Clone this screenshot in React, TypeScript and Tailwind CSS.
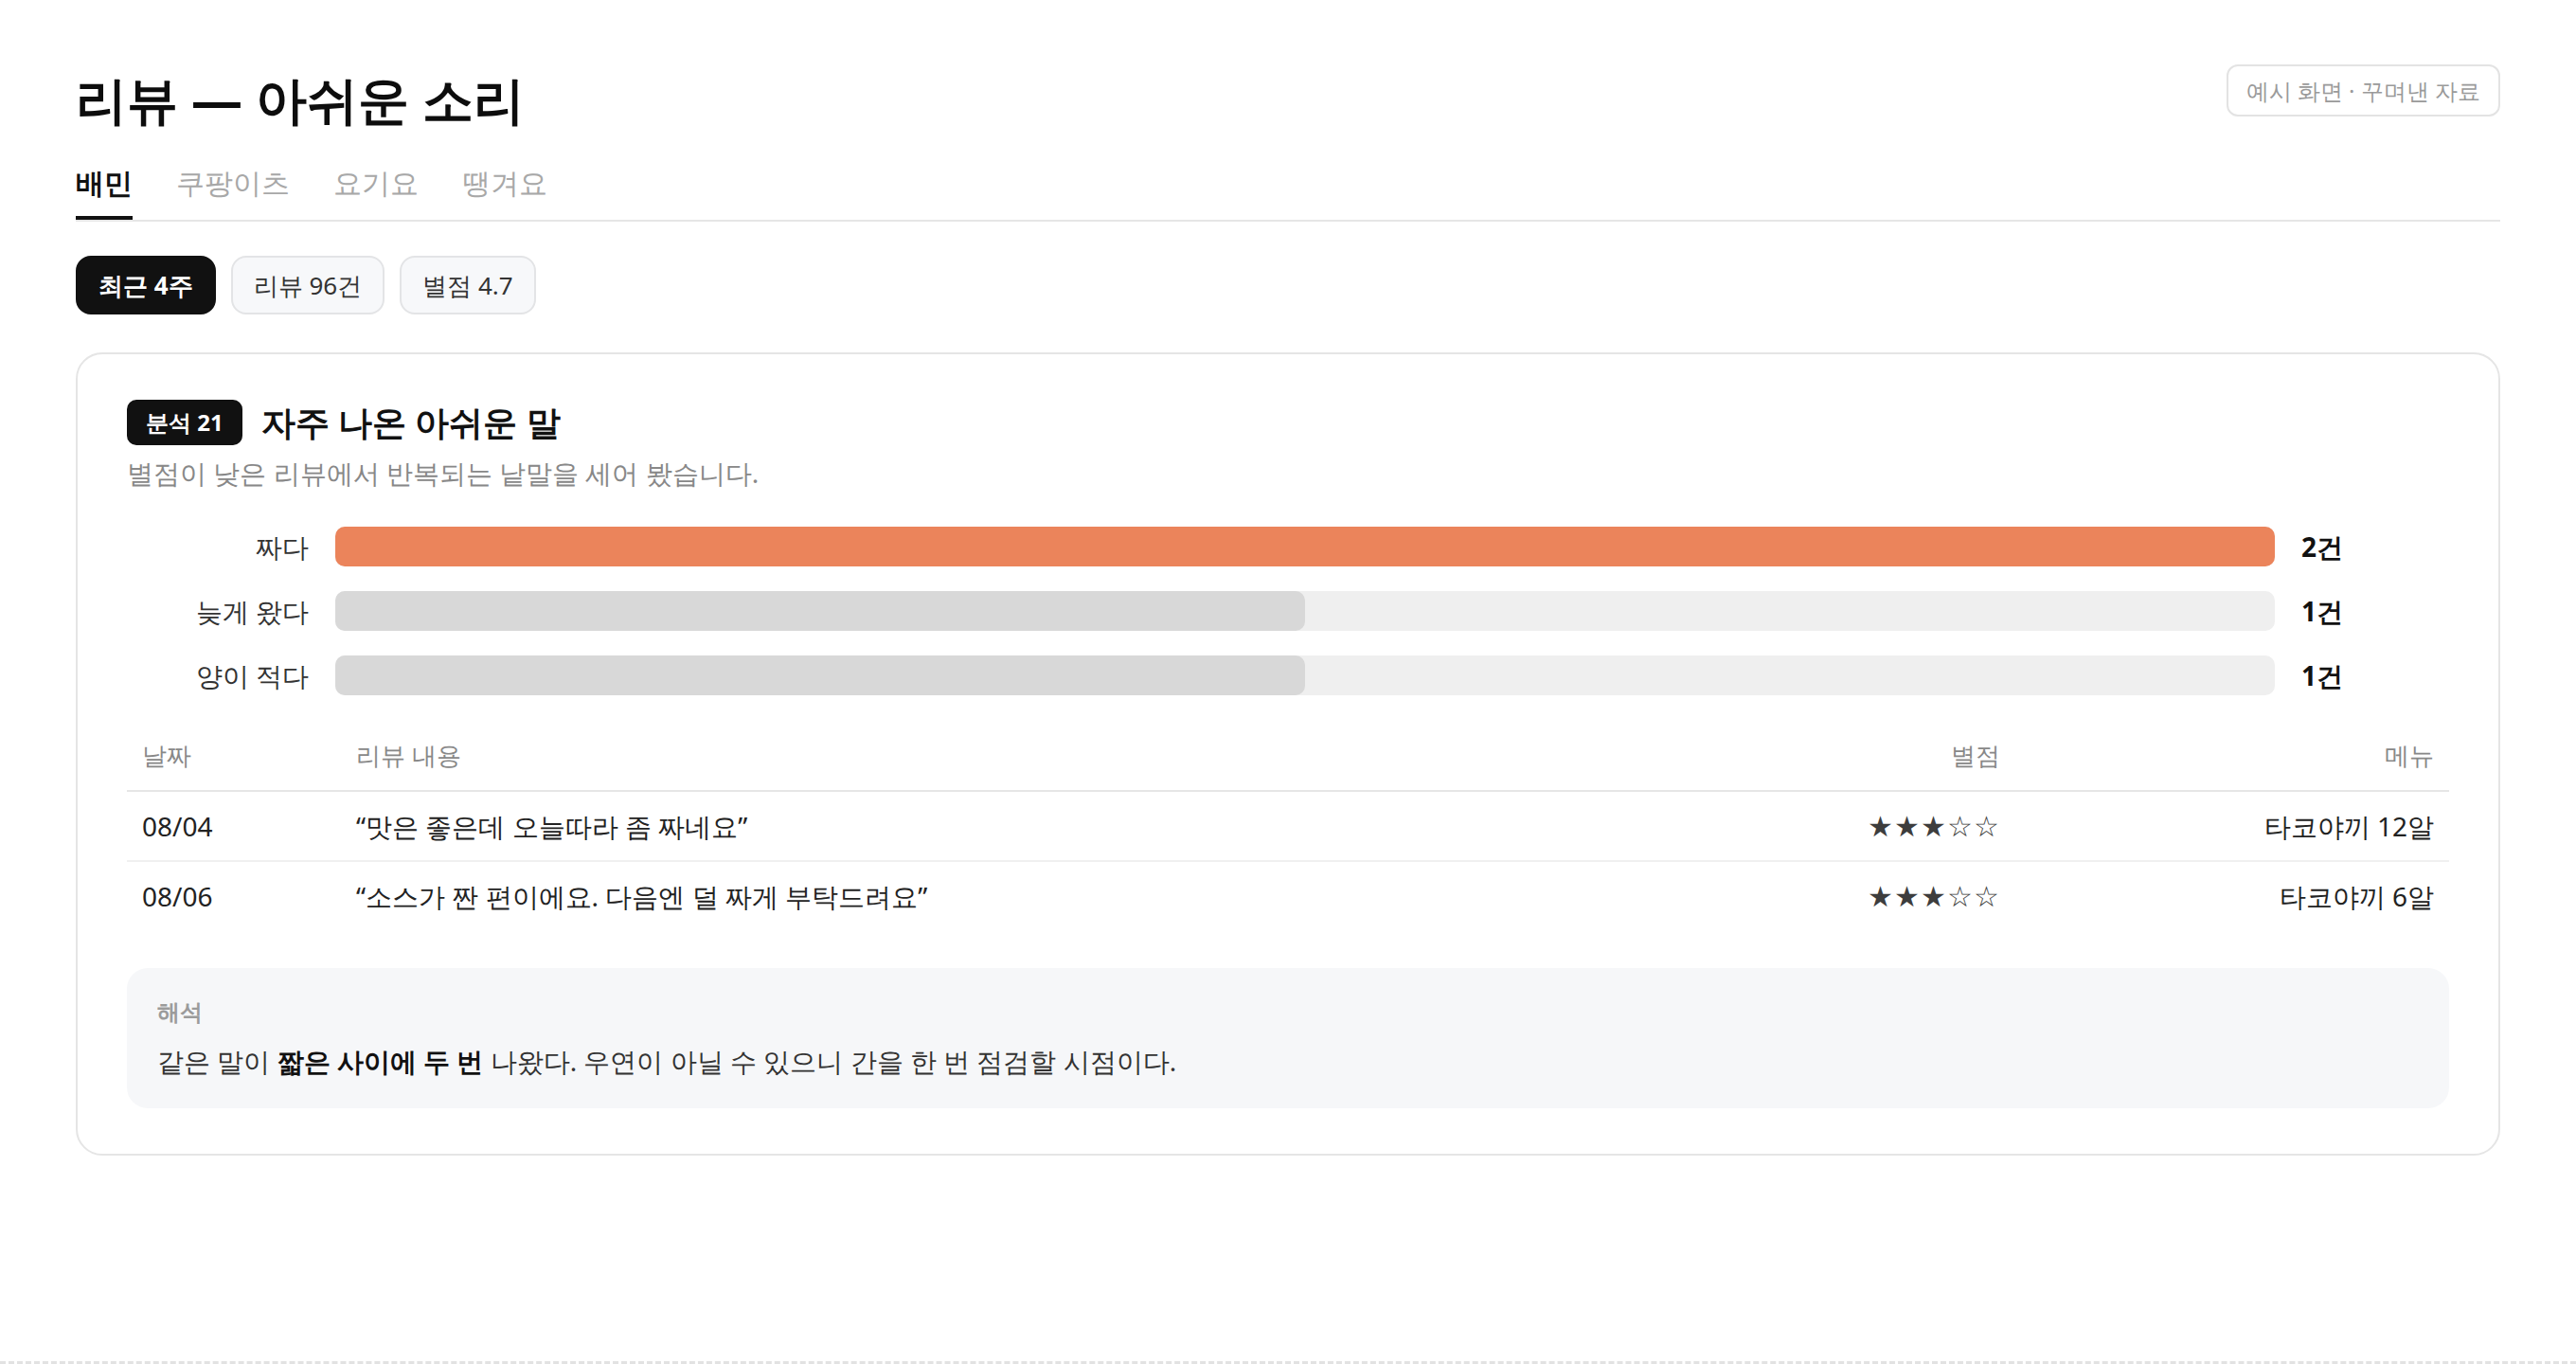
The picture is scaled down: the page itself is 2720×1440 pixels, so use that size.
import { useState } from 'react';

interface Word {
  label: string;
  count: number;
}

interface Review {
  date: string;
  text: string;
  rating: number;
  menu: string;
}

const tabs = ['배민', '쿠팡이츠', '요기요', '땡겨요'];

const chips = ['최근 4주', '리뷰 96건', '별점 4.7'];

const words: Word[] = [
  { label: '짜다', count: 2 },
  { label: '늦게 왔다', count: 1 },
  { label: '양이 적다', count: 1 },
];

const reviews: Review[] = [
  { date: '08/04', text: '“맛은 좋은데 오늘따라 좀 짜네요”', rating: 3, menu: '타코야끼 12알' },
  { date: '08/06', text: '“소스가 짠 편이에요. 다음엔 덜 짜게 부탁드려요”', rating: 3, menu: '타코야끼 6알' },
];

function Stars({ value }: { value: number }) {
  return (
    <span className="text-[30px] leading-[40px] tracking-[1px] text-[#3d3d3d]">
      {'★'.repeat(value)}
      {'☆'.repeat(5 - value)}
    </span>
  );
}

export default function App() {
  const [activeTab, setActiveTab] = useState(0);
  const max = Math.max(...words.map((w) => w.count));

  return (
    <div className="min-h-screen bg-white border-b-[3px] border-dashed border-[#e2e2e2] font-sans text-[#222]">
      <div className="px-[80px] pt-[68px]">
        {/* Header */}
        <div className="flex items-start justify-between">
          <h1 className="text-[54px] leading-[72px] font-bold text-[#0d0d0d]">리뷰 — 아쉬운 소리</h1>
          <span className="rounded-[12px] border-2 border-[#e3e3e3] px-[19px] py-[7px] text-[24px] leading-[37px] text-[#9a9a9a]">
            예시 화면 · 꾸며낸 자료
          </span>
        </div>

        {/* Tabs */}
        <div className="mt-[30px] flex gap-[46px] border-b-2 border-[#e6e6e6]">
          {tabs.map((tab, i) => (
            <button
              key={tab}
              onClick={() => setActiveTab(i)}
              className={`pb-[13px] text-[30px] leading-[45px] border-b-4 ${
                i === activeTab ? 'border-[#111] font-bold text-[#111]' : 'border-transparent text-[#a8a8a8]'
              }`}
            >
              {tab}
            </button>
          ))}
        </div>

        {/* Filter chips */}
        <div className="mt-[36px] flex gap-[16px]">
          {chips.map((chip, i) => (
            <span
              key={chip}
              className={`rounded-[16px] border-2 px-[22px] py-[10px] text-[26px] leading-[38px] ${
                i === 0 ? 'border-[#111] bg-[#111] font-bold text-white' : 'border-[#e3e4e6] bg-[#f7f8fa] text-[#333]'
              }`}
            >
              {chip}
            </span>
          ))}
        </div>

        {/* Analysis card */}
        <div className="mt-[40px] rounded-[28px] border-2 border-[#e5e5e5] px-[52px] py-[48px]">
          <div className="flex h-[48px] items-center gap-[20px]">
            <span className="rounded-[10px] bg-[#111] px-[20px] text-[24px] leading-[48px] font-bold text-white">분석 21</span>
            <h2 className="text-[36px] leading-[48px] font-bold text-[#111]">자주 나온 아쉬운 말</h2>
          </div>
          <p className="mt-[8px] text-[28px] leading-[42px] text-[#888]">
            별점이 낮은 리뷰에서 반복되는 낱말을 세어 봤습니다.
          </p>

          {/* Bars */}
          <div className="mt-[36px] flex flex-col gap-[26px]">
            {words.map((w, i) => (
              <div key={w.label} className="grid grid-cols-[192px_1fr_156px] items-center gap-x-[28px]">
                <span className="text-right text-[28px] leading-[42px] text-[#333]">{w.label}</span>
                <div className="h-[42px] rounded-[10px] bg-[#efefef]">
                  <div
                    className={`h-full rounded-[10px] ${i === 0 ? 'bg-[#eb845b]' : 'bg-[#d8d8d8]'}`}
                    style={{ width: `${(w.count / max) * 100}%` }}
                  />
                </div>
                <span className="text-[28px] leading-[42px] font-bold text-[#111]">{w.count}건</span>
              </div>
            ))}
          </div>

          {/* Table */}
          <div className="mt-[26px]">
            <div className="grid grid-cols-[226px_1fr_240px_458px] border-b-2 border-[#e6e6e6] text-[26px] leading-[38px] text-[#888]">
              <div className="px-[16px] py-[18px]">날짜</div>
              <div className="px-[16px] py-[18px]">리뷰 내용</div>
              <div className="px-[16px] py-[18px] text-right">별점</div>
              <div className="px-[16px] py-[18px] text-right">메뉴</div>
            </div>
            {reviews.map((r, i) => (
              <div
                key={r.date}
                className={`grid grid-cols-[226px_1fr_240px_458px] text-[28px] leading-[40px] text-[#222] ${
                  i < reviews.length - 1 ? 'border-b-2 border-[#f0f0f0]' : ''
                }`}
              >
                <div className="px-[16px] py-[16px]">{r.date}</div>
                <div className="px-[16px] py-[16px]">{r.text}</div>
                <div className="px-[16px] py-[16px] text-right">
                  <Stars value={r.rating} />
                </div>
                <div className="px-[16px] py-[16px] text-right">{r.menu}</div>
              </div>
            ))}
          </div>

          {/* Interpretation */}
          <div className="mt-[40px] rounded-[22px] bg-[#f6f7f9] px-[32px] py-[28px]">
            <div className="text-[24px] leading-[36px] font-semibold text-[#9b9b9b]">해석</div>
            <p className="mt-[12px] text-[28px] leading-[44px] text-[#333]">
              같은 말이 <strong className="font-bold text-[#111]">짧은 사이에 두 번</strong> 나왔다. 우연이 아닐 수 있으니 간을 한 번 점검할 시점이다.
            </p>
          </div>
        </div>
      </div>
    </div>
  );
}
